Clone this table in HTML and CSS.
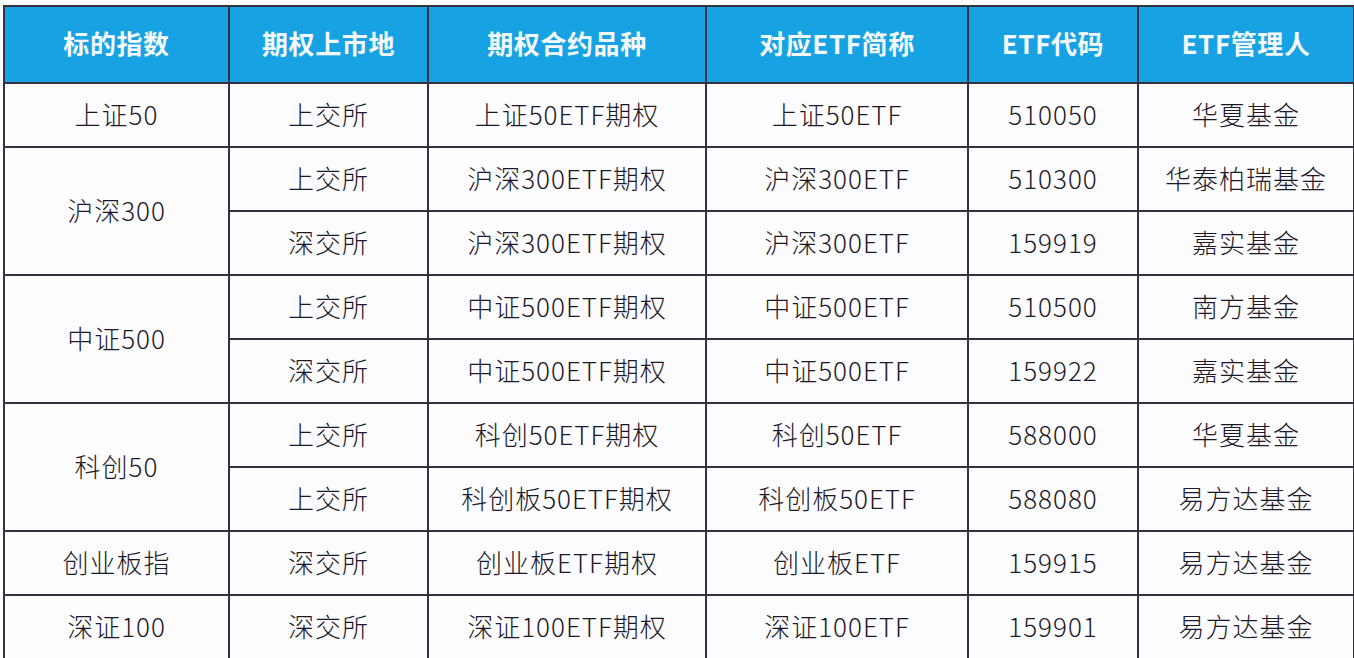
FILE: index.html
```html
<!DOCTYPE html>
<html lang="zh">
<head>
<meta charset="utf-8">
<link rel="stylesheet" href="styles.css">
</head>
<body>
<table class="etf">
  <colgroup>
    <col class="c1"><col class="c2"><col class="c3"><col class="c4"><col class="c5"><col class="c6">
  </colgroup>
  <thead>
    <tr>
      <th>标的指数</th><th>期权上市地</th><th>期权合约品种</th><th>对应ETF简称</th><th>ETF代码</th><th>ETF管理人</th>
    </tr>
  </thead>
  <tbody>
    <tr><td>上证50</td><td>上交所</td><td>上证50ETF期权</td><td>上证50ETF</td><td>510050</td><td>华夏基金</td></tr>
    <tr><td rowspan="2">沪深300</td><td>上交所</td><td>沪深300ETF期权</td><td>沪深300ETF</td><td>510300</td><td>华泰柏瑞基金</td></tr>
    <tr><td>深交所</td><td>沪深300ETF期权</td><td>沪深300ETF</td><td>159919</td><td>嘉实基金</td></tr>
    <tr><td rowspan="2">中证500</td><td>上交所</td><td>中证500ETF期权</td><td>中证500ETF</td><td>510500</td><td>南方基金</td></tr>
    <tr><td>深交所</td><td>中证500ETF期权</td><td>中证500ETF</td><td>159922</td><td>嘉实基金</td></tr>
    <tr><td rowspan="2">科创50</td><td>上交所</td><td>科创50ETF期权</td><td>科创50ETF</td><td>588000</td><td>华夏基金</td></tr>
    <tr><td>上交所</td><td>科创板50ETF期权</td><td>科创板50ETF</td><td>588080</td><td>易方达基金</td></tr>
    <tr><td>创业板指</td><td>深交所</td><td>创业板ETF期权</td><td>创业板ETF</td><td>159915</td><td>易方达基金</td></tr>
    <tr><td>深证100</td><td>深交所</td><td>深证100ETF期权</td><td>深证100ETF</td><td>159901</td><td>易方达基金</td></tr>
  </tbody>
</table>
</body>
</html>
```

FILE: styles.css
```css
html, body {
  margin: 0;
  padding: 0;
  background: #ffffff;
  overflow: hidden;
}

body {
  padding: 5px 0 0 3px;
  font-family: "Noto Sans CJK SC", "Noto Sans", sans-serif;
}

.etf {
  border-collapse: collapse;
  table-layout: fixed;
  width: 1350px;
}

.c1 { width: 225px; }
.c2 { width: 199px; }
.c3 { width: 278px; }
.c4 { width: 262px; }
.c5 { width: 170px; }
.c6 { width: 216px; }

.etf th,
.etf td {
  border: 2px solid #36313e;
  text-align: center;
  vertical-align: middle;
  white-space: nowrap;
  line-height: 1;
}

.etf th {
  background: #17a3e3;
  color: #f4f9fd;
  font-weight: 700;
  font-size: 26px;
  height: 71px;
  padding: 0 0 4px;
  letter-spacing: 0.6px;
}

.etf td {
  background: #fdfdff;
  color: #1c1828;
  font-size: 26px;
  font-weight: 300;
  height: 59px;
  padding: 0 0 3px;
  letter-spacing: 1px;
}
```
